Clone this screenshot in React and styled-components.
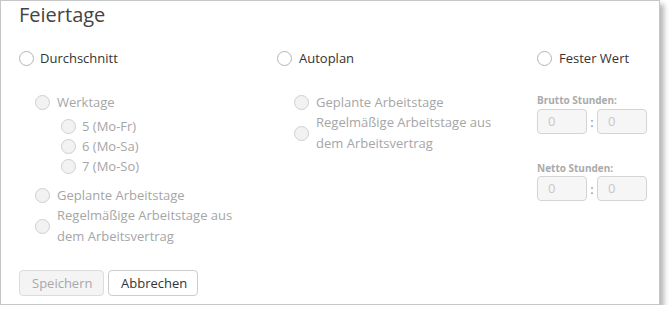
import React from "react";
import styled, { createGlobalStyle } from "styled-components";

const Global = createGlobalStyle`
  html, body { margin: 0; padding: 0; background: #fff; }
  body { font-family: "Open Sans", "Noto Sans", sans-serif; }
  * { box-sizing: border-box; }
`;

const Panel = styled.div`
  width: 660px;
  height: 305px;
  border: 1px solid #c6c6c6;
  background: #fff;
  box-shadow: 4px 4px 5px rgba(0, 0, 0, 0.28);
  padding: 0 0 8px 18px;
  display: flex;
  flex-direction: column;
`;

const Title = styled.h2`
  margin: 0;
  font-size: 20px;
  font-weight: 400;
  line-height: 28px;
  color: #444;
`;

const Columns = styled.div`
  margin-top: 19px;
  display: grid;
  grid-template-columns: 258px 260px 1fr;
`;

const Column = styled.div`
  display: flex;
  flex-direction: column;
`;

const Option = styled.label`
  display: flex;
  align-items: center;
  gap: ${(p) => p.$gap ?? 7}px;
  margin-left: ${(p) => p.$indent ?? 0}px;
  margin-top: ${(p) => p.$top ?? 0}px;
  font-size: 13px;
  line-height: ${(p) => p.$lh ?? 20}px;
  color: ${(p) => (p.$disabled ? "#a6a6a6" : "#333")};
`;

const Radio = styled.span`
  flex: none;
  width: 15px;
  height: 15px;
  border-radius: 50%;
  border: 1px solid ${(p) => (p.$disabled ? "#cfcfcf" : "#b4b4b4")};
  background: ${(p) => (p.$disabled ? "#f2f2f2" : "#fff")};
`;

const Text = styled.span`
  max-width: ${(p) => (p.$width ? `${p.$width}px` : "none")};
`;

const FieldLabel = styled.div`
  margin-top: ${(p) => p.$top}px;
  font-size: 10px;
  font-weight: 700;
  line-height: 14px;
  color: #aaa;
`;

const TimeRow = styled.div`
  margin-top: ${(p) => p.$top}px;
  display: flex;
  align-items: center;
`;

const TimeInput = styled.div`
  width: 50px;
  height: 25px;
  border: 1px solid #d4d4d4;
  border-radius: 4px;
  background: #f6f6f6;
  color: #c8c8c8;
  font-size: 13px;
  line-height: 23px;
  padding-left: 10px;
`;

const Colon = styled.span`
  width: 10px;
  text-align: center;
  color: #888;
  font-size: 13px;
`;

const Footer = styled.div`
  margin-top: auto;
  display: flex;
  gap: 4px;
`;

const Button = styled.button`
  height: 26px;
  padding: 0 12px;
  border-radius: 4px;
  font-family: inherit;
  font-size: 13px;
  border: 1px solid ${(p) => (p.$disabled ? "#dcdcdc" : "#cccccc")};
  background: ${(p) => (p.$disabled ? "#f4f4f4" : "#fff")};
  color: ${(p) => (p.$disabled ? "#a8a8a8" : "#333")};
  width: ${(p) => p.$w}px;
`;

function Opt({ children, disabled, indent, top, gap, lh, width }) {
  return (
    <Option $disabled={disabled} $indent={indent} $top={top} $gap={gap} $lh={lh}>
      <Radio $disabled={disabled} />
      <Text $width={width}>{children}</Text>
    </Option>
  );
}

function Time({ top }) {
  return (
    <TimeRow $top={top}>
      <TimeInput>0</TimeInput>
      <Colon>:</Colon>
      <TimeInput>0</TimeInput>
    </TimeRow>
  );
}

export default function App() {
  return (
    <>
      <Global />
      <Panel>
        <Title>Feiertage</Title>
        <Columns>
          <Column>
            <Opt gap={6}>Durchschnitt</Opt>
            <Opt disabled indent={16} top={24}>Werktage</Opt>
            <Opt disabled indent={42} top={4} gap={6}>5 (Mo-Fr)</Opt>
            <Opt disabled indent={42} gap={6}>6 (Mo-Sa)</Opt>
            <Opt disabled indent={42} gap={6}>7 (Mo-So)</Opt>
            <Opt disabled indent={16} top={9}>Geplante Arbeitstage</Opt>
            <Opt disabled indent={16} lh={21} width={190}>
              Regelmäßige Arbeitstage aus dem Arbeitsvertrag
            </Opt>
          </Column>
          <Column>
            <Opt gap={7}>Autoplan</Opt>
            <Opt disabled indent={17} top={24}>Geplante Arbeitstage</Opt>
            <Opt disabled indent={17} lh={21} width={190}>
              Regelmäßige Arbeitstage aus dem Arbeitsvertrag
            </Opt>
          </Column>
          <Column>
            <Opt gap={7}>Fester Wert</Opt>
            <FieldLabel $top={25}>Brutto Stunden:</FieldLabel>
            <Time top={2} />
            <FieldLabel $top={27}>Netto Stunden:</FieldLabel>
            <Time top={1} />
          </Column>
        </Columns>
        <Footer>
          <Button $disabled $w={85}>Speichern</Button>
          <Button $w={90}>Abbrechen</Button>
        </Footer>
      </Panel>
    </>
  );
}
